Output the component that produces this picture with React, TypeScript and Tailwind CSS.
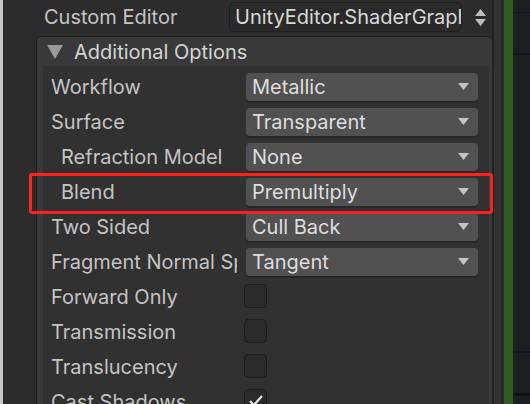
import React from "react";

const font = { fontFamily: "Inter, 'Noto Sans', sans-serif" };

function Arrow() {
  return (
    <svg width="11" height="7" viewBox="0 0 11 7" className="shrink-0">
      <polygon points="0,0 11,0 5.5,7" fill="#c4c4c4" />
    </svg>
  );
}

function Dropdown({ value }: { value: string }) {
  return (
    <div className="flex h-[28px] w-[232px] shrink-0 items-center justify-between rounded-[4px] bg-[#515151] pl-[6px] pr-[9px] shadow-[0_2px_0_#262626]">
      <span className="text-[#dedede] leading-none">{value}</span>
      <Arrow />
    </div>
  );
}

function Checkbox({ checked }: { checked?: boolean }) {
  return (
    <div className="ml-[-2px] mt-[-2px] flex h-[24px] w-[23px] shrink-0 items-center justify-center rounded-[4px] border border-[#1d1d1d] bg-[#2a2a2a]">
      {checked && (
        <svg width="16" height="14" viewBox="0 0 16 14">
          <polyline points="2,7 6,11 14,2" fill="none" stroke="#e6e6e6" strokeWidth="2.2" />
        </svg>
      )}
    </div>
  );
}

function Row({ label, indent, children }: { label: string; indent?: boolean; children: React.ReactNode }) {
  return (
    <div className="flex h-[35px] shrink-0 items-center">
      <div className={`w-[203px] shrink-0 ${indent ? "pl-[18px]" : "pl-[8px]"}`}>
        <div className={`${indent ? "w-[176px]" : "w-[186px]"} overflow-hidden whitespace-nowrap text-[#c4c4c4]`}>{label}</div>
      </div>
      {children}
    </div>
  );
}

export default function App() {
  return (
    <div className="relative flex h-[404px] w-[530px] overflow-hidden bg-[#2c2c2c] text-[20px]" style={font}>
      <div className="w-[3px] shrink-0 bg-[#c8c8c8]" />
      <div className="flex w-[489px] shrink-0 flex-col">
        <div className="flex h-[36px] shrink-0 items-center pb-[2px]">
          <div className="w-[226px] shrink-0 pl-[41px] text-[#c4c4c4] whitespace-nowrap">Custom Editor</div>
          <div className="flex h-[30px] w-[233px] shrink-0 items-center overflow-hidden whitespace-nowrap rounded-[5px] border border-[#1f1f1f] bg-[#2a2a2a] pl-[5px] text-[#d8d8d8]">
            UnityEditor.ShaderGraph.GenericShaderGraphMaterialGUI
          </div>
          <div className="ml-[13px] flex flex-col items-center gap-[3px]">
            <svg width="11" height="7" viewBox="0 0 11 7">
              <polygon points="5.5,0 11,7 0,7" fill="#bdbdbd" />
            </svg>
            <svg width="11" height="7" viewBox="0 0 11 7">
              <polygon points="0,0 11,0 5.5,7" fill="#bdbdbd" />
            </svg>
          </div>
        </div>
        <div className="ml-[33px] mr-[-1px] flex flex-1 flex-col rounded-t-[5px] border border-b-0 border-[#1e1e1e] bg-[#393939]">
          <div className="flex h-[29px] shrink-0 items-center pl-[10px]">
            <svg width="16" height="14" viewBox="0 0 16 14" className="shrink-0">
              <polygon points="0,0 16,0 8,14" fill="#9a9a9a" />
            </svg>
            <span className="ml-[11px] text-[#d4d4d4]">Additional Options</span>
          </div>
          <div className="ml-[6px] mr-[3px] flex flex-1 flex-col bg-[#313131] pt-[3px]">
            <Row label="Workflow"><Dropdown value="Metallic" /></Row>
            <Row label="Surface"><Dropdown value="Transparent" /></Row>
            <Row label="Refraction Model" indent><Dropdown value="None" /></Row>
            <Row label="Blend" indent><Dropdown value="Premultiply" /></Row>
            <Row label="Two Sided"><Dropdown value="Cull Back" /></Row>
            <Row label="Fragment Normal Space"><Dropdown value="Tangent" /></Row>
            <Row label="Forward Only"><Checkbox /></Row>
            <Row label="Transmission"><Checkbox /></Row>
            <Row label="Translucency"><Checkbox /></Row>
            <Row label="Cast Shadows"><Checkbox checked /></Row>
          </div>
        </div>
      </div>
      <div className="w-[2px] shrink-0 bg-[#232323]" />
      <div className="w-[7px] shrink-0 bg-[#323232]" />
      <div className="w-[3px] shrink-0 bg-[#292929]" />
      <div className="w-[9px] shrink-0 bg-[#2f5c1f]" />
      <div className="flex w-[17px] shrink-0 flex-col bg-[#1d1e22]">
        <div className="mt-[12px] h-[1px] shrink-0 bg-[#141518]" />
        <div className="mt-[40px] h-[2px] shrink-0 bg-[#141518]" />
        <div className="mt-[296px] h-[2px] shrink-0 bg-[#141518]" />
        <div className="mt-[40px] h-[3px] shrink-0 bg-[#111114]" />
      </div>
      <div className="absolute left-[29px] top-[173px] h-[41px] w-[464px] rounded-[3px] border-[3px] border-[#ff2020]" />
    </div>
  );
}
